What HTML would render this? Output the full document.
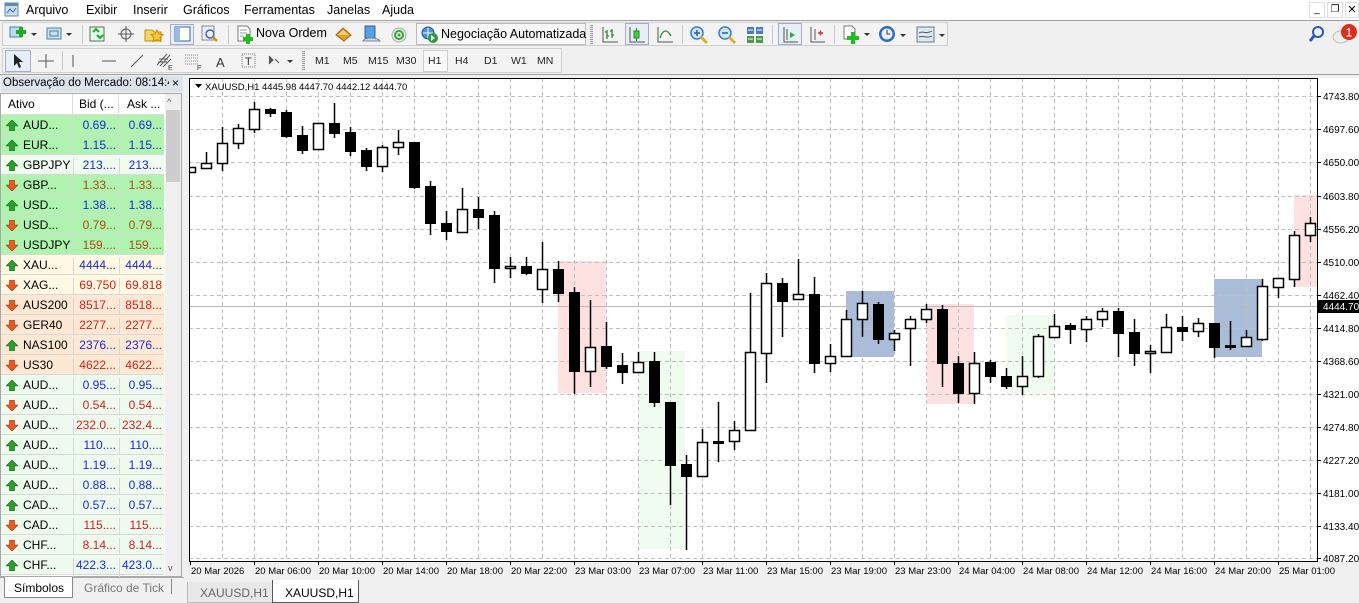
<!DOCTYPE html>
<html><head><meta charset="utf-8">
<style>
*{margin:0;padding:0;box-sizing:border-box}
body{width:1359px;height:603px;overflow:hidden;background:#f0f0f0;font-family:"Liberation Sans",sans-serif;font-size:12px;color:#000;position:relative}
.a{position:absolute}
.menu span{position:absolute;top:3px;font-size:12.5px}
.tb{position:absolute;border:1px solid #d0d0d0;background:#f3f3f3}
.sep{position:absolute;width:1px;background:#c8c8c8}
.ico{position:absolute}
.row{position:absolute;left:0;width:163px;height:20px;border-bottom:1px solid #d8d8d8}
.row .s{position:absolute;left:22px;top:3px;font-size:12px}
.row .b{position:absolute;left:72px;width:45px;text-align:right;top:3px;border-left:1px solid #d8d8d8;height:20px;padding-right:2px}
.row .k{position:absolute;left:118px;width:45px;text-align:right;top:3px;border-left:1px solid #d8d8d8;height:20px;padding-right:2px}
.row svg{position:absolute;left:5px;top:5px}
.tf{position:absolute;top:55px;font-size:10.5px;color:#222}
</style></head><body>
<div class="a" style="left:0;top:0;width:1359px;height:20px;background:#fff"></div>
<svg class="a" style="left:4px;top:2px" width="15" height="15"><rect x="1" y="1" width="13" height="13" fill="#cde" stroke="#68a"/><rect x="1" y="1" width="13" height="3" fill="#68a"/><path d="M3 11 L6 7 L9 10 L12 6" stroke="#36c" fill="none"/></svg>
<div class="menu"><span style="left:26px">Arquivo</span><span style="left:86px">Exibir</span><span style="left:133px">Inserir</span><span style="left:183px">Gráficos</span><span style="left:244px">Ferramentas</span><span style="left:327px">Janelas</span><span style="left:382px">Ajuda</span></div>
<div class="a" style="left:1309px;top:2px;width:16px;height:16px;border:1px solid #ddd;background:#fff;font-size:10px;text-align:center;line-height:13px">_</div>
<div class="a" style="left:1327px;top:2px;width:16px;height:16px;border:1px solid #ddd;background:#fff;font-size:10px;text-align:center;line-height:14px">❐</div>
<div class="a" style="left:1345px;top:2px;width:14px;height:16px;border:1px solid #ddd;background:#fff;font-size:11px;text-align:center;line-height:14px">✕</div>
<div class="a" style="left:0;top:20px;width:1359px;height:1px;background:#a0a0a0"></div>
<div class="tb" style="left:2px;top:22px;width:946px;height:24px"></div>
<svg class="ico" style="left:8px;top:25px" width="30" height="18"><rect x="2" y="2" width="12" height="10" fill="#bde" stroke="#48a"/><path d="M8 7h10M13 2v10" stroke="#2a2" stroke-width="4"/><path d="M23 8l3 3 3-3z" fill="#333"/></svg>
<svg class="ico" style="left:45px;top:25px" width="30" height="18"><rect x="2" y="3" width="14" height="11" fill="#cde" stroke="#48a"/><rect x="5" y="6" width="8" height="5" fill="none" stroke="#48a"/><path d="M21 8l3 3 3-3z" fill="#333"/></svg>
<div class="sep" style="left:82px;top:25px;height:19px"></div>
<svg class="ico" style="left:88px;top:25px" width="20" height="18"><rect x="2" y="2" width="14" height="14" fill="#dfe" stroke="#666"/><path d="M5 7l3-3 3 3M9 10l3 3 3-3" stroke="#2a2" fill="none" stroke-width="2"/></svg>
<svg class="ico" style="left:117px;top:25px" width="18" height="18"><circle cx="9" cy="9" r="5" fill="none" stroke="#555"/><path d="M9 1v16M1 9h16" stroke="#555"/></svg>
<svg class="ico" style="left:144px;top:25px" width="20" height="18"><path d="M1 5h7l2 2h7v9H1z" fill="#f5d66a" stroke="#b90"/><path d="M13 5l2 4 4 .5-3 3 1 4-4-2-4 2 1-4-3-3 4-.5z" fill="#fc3" stroke="#c80"/></svg>
<div class="a" style="left:170px;top:24px;width:24px;height:21px;background:#e6eef8;border:1px solid #aac"></div>
<svg class="ico" style="left:174px;top:26px" width="18" height="17"><rect x="1" y="1" width="15" height="14" fill="#fff" stroke="#36a"/><rect x="1" y="1" width="5" height="14" fill="#9bd"/></svg>
<svg class="ico" style="left:200px;top:25px" width="20" height="18"><rect x="2" y="1" width="12" height="14" fill="#eef" stroke="#888"/><circle cx="10" cy="9" r="4" fill="none" stroke="#46a" stroke-width="1.5"/><path d="M13 12l4 4" stroke="#c90" stroke-width="2.5"/></svg>
<div class="sep" style="left:228px;top:25px;height:19px"></div>
<svg class="ico" style="left:236px;top:25px" width="18" height="19"><path d="M2 1h9l3 3v12H2z" fill="#fff" stroke="#777"/><path d="M4 5h7M4 8h7M4 11h4" stroke="#999"/><path d="M7 14h10M12 9v10" stroke="#2b2" stroke-width="4"/></svg>
<div class="a" style="left:256px;top:26px;font-size:12.5px">Nova Ordem</div>
<svg class="ico" style="left:334px;top:26px" width="20" height="17"><path d="M2 9l7-7 8 7-7 6z" fill="#e0a030" stroke="#a06010"/><path d="M4 9l5-5 6 5" fill="#f8d070"/></svg>
<svg class="ico" style="left:362px;top:25px" width="20" height="19"><rect x="3" y="1" width="10" height="12" fill="#5a9fe0" stroke="#2a60a0"/><path d="M1 16c2-4 14-4 17 0z" fill="#cde" stroke="#789"/></svg>
<svg class="ico" style="left:390px;top:26px" width="18" height="17"><circle cx="9" cy="9" r="7" fill="#e8e8e8" stroke="#aaa"/><circle cx="9" cy="9" r="4" fill="none" stroke="#3a3" stroke-width="2"/><circle cx="9" cy="9" r="1.5" fill="#3a3"/></svg>
<div class="a" style="left:416px;top:23px;width:170px;height:22px;border:1px solid #bbb;background:#f7f7f7"></div>
<svg class="ico" style="left:420px;top:25px" width="20" height="19"><circle cx="8" cy="8" r="6" fill="#4a8fd8" stroke="#2a5a9a"/><path d="M3 8h10M8 3v10" stroke="#fff"/><circle cx="13" cy="13" r="5" fill="#2a9a3a"/><path d="M11 10l4 3-4 3z" fill="#fff"/></svg>
<div class="a" style="left:441px;top:27px;font-size:12.5px">Negociação Automatizada</div>
<div class="sep" style="left:590px;top:25px;height:19px;width:3px;background:repeating-linear-gradient(#999 0 1px,transparent 1px 2px)"></div>
<svg class="ico" style="left:601px;top:26px" width="18" height="18"><path d="M2 1v15h15" stroke="#555" fill="none"/><path d="M6 4v9M6 6H4M6 10h2M11 3v9M11 5H9M11 9h2" stroke="#2a8a2a" stroke-width="1.3"/></svg>
<div class="a" style="left:625px;top:23px;width:24px;height:22px;background:#e6eef8;border:1px solid #aac"></div>
<svg class="ico" style="left:628px;top:26px" width="18" height="18"><path d="M2 1v15h15" stroke="#555" fill="none"/><rect x="6" y="5" width="5" height="7" fill="#4c4" stroke="#282"/><path d="M8.5 2v3M8.5 12v3" stroke="#282"/></svg>
<svg class="ico" style="left:656px;top:26px" width="18" height="18"><path d="M2 1v15h15" stroke="#555" fill="none"/><path d="M4 12c3-9 7-9 11-2" stroke="#2a8a2a" fill="none" stroke-width="1.3"/></svg>
<div class="sep" style="left:682px;top:25px;height:19px"></div>
<svg class="ico" style="left:689px;top:25px" width="20" height="20"><circle cx="8" cy="8" r="6" fill="#cfe6fa" stroke="#3a7ac8" stroke-width="1.5"/><path d="M5 8h6M8 5v6" stroke="#2a5aa8" stroke-width="1.5"/><path d="M12 12l6 6" stroke="#d8b030" stroke-width="3"/></svg>
<svg class="ico" style="left:717px;top:25px" width="20" height="20"><circle cx="8" cy="8" r="6" fill="#cfe6fa" stroke="#3a7ac8" stroke-width="1.5"/><path d="M5 8h6" stroke="#2a5aa8" stroke-width="1.5"/><path d="M12 12l6 6" stroke="#d8b030" stroke-width="3"/></svg>
<svg class="ico" style="left:746px;top:26px" width="18" height="18"><rect x="1" y="1" width="7" height="7" fill="#4a7ac0"/><rect x="10" y="1" width="7" height="7" fill="#4a7ac0"/><rect x="1" y="10" width="7" height="7" fill="#4a9a4a"/><rect x="10" y="10" width="7" height="7" fill="#4a9a4a"/><path d="M2 4h5M11 4h5M2 13h5M11 13h5" stroke="#fff"/></svg>
<div class="sep" style="left:772px;top:25px;height:19px"></div>
<div class="a" style="left:778px;top:23px;width:24px;height:22px;background:#e6eef8;border:1px solid #aac"></div>
<svg class="ico" style="left:781px;top:26px" width="18" height="18"><path d="M3 1v15h14" stroke="#555" fill="none"/><path d="M6 3v11" stroke="#555"/><path d="M9 6l5 3-5 3z" fill="#3a3"/></svg>
<svg class="ico" style="left:808px;top:26px" width="18" height="18"><path d="M3 1v15h14M7 3v11" stroke="#555" fill="none"/><path d="M10 7h5M12.5 4.5v5" stroke="#c33" stroke-width="1.5"/></svg>
<div class="sep" style="left:834px;top:25px;height:19px"></div>
<svg class="ico" style="left:842px;top:24px" width="30" height="21"><path d="M2 2h8l3 3v10H2z" fill="#fff" stroke="#777"/><path d="M5 14h12M11 8v12" stroke="#2b2" stroke-width="4"/><path d="M22 9l3 3 3-3z" fill="#333"/></svg>
<svg class="ico" style="left:878px;top:25px" width="30" height="20"><circle cx="9" cy="9" r="8" fill="#2a6ac8"/><circle cx="9" cy="9" r="5.5" fill="#eef"/><path d="M9 5v4h3" stroke="#333" fill="none"/><path d="M22 9l3 3 3-3z" fill="#333"/></svg>
<svg class="ico" style="left:916px;top:26px" width="30" height="18"><rect x="1" y="1" width="17" height="15" fill="#dbe8f5" stroke="#678"/><path d="M3 7c3-3 6 2 13-2M3 11c4-2 8 2 13-1" stroke="#555" fill="none"/><path d="M23 8l3 3 3-3z" fill="#333"/></svg>
<svg class="ico" style="left:1308px;top:25px" width="18" height="18"><circle cx="10" cy="7" r="5" fill="none" stroke="#2a5ab8" stroke-width="2"/><path d="M6 11l-4 5" stroke="#2a5ab8" stroke-width="3"/></svg>
<svg class="ico" style="left:1332px;top:22px" width="27" height="24"><ellipse cx="9" cy="15" rx="8" ry="6" fill="#eee" stroke="#bbb"/><circle cx="17" cy="10" r="8" fill="#d83020"/><text x="17" y="14.5" font-size="12" fill="#fff" text-anchor="middle" font-family="Liberation Sans">1</text></svg>
<div class="tb" style="left:2px;top:48px;width:560px;height:25px"></div>
<div class="a" style="left:5px;top:50px;width:26px;height:22px;background:#e6eef8;border:1px solid #aac"></div>
<svg class="ico" style="left:12px;top:53px" width="12" height="16"><path d="M2 1v12l3-3 2 5 2-1-2-5h4z" fill="#222"/></svg>
<svg class="ico" style="left:37px;top:53px" width="18" height="16"><path d="M9 1v14M1 8h16" stroke="#555"/></svg>
<div class="sep" style="left:62px;top:51px;height:19px"></div>
<svg class="ico" style="left:68px;top:53px" width="10" height="16"><path d="M5 2v12" stroke="#555"/></svg>
<svg class="ico" style="left:100px;top:53px" width="18" height="16"><path d="M2 8h14" stroke="#555"/></svg>
<svg class="ico" style="left:128px;top:53px" width="18" height="16"><path d="M3 14L15 2" stroke="#555"/></svg>
<svg class="ico" style="left:154px;top:51px" width="20" height="20"><path d="M3 14L13 3M6 15L16 4M9 16L17 8M5 8h9M4 11h9" stroke="#555"/><text x="14" y="19" font-size="7" fill="#333">E</text></svg>
<svg class="ico" style="left:183px;top:51px" width="20" height="20"><path d="M2 4h13M2 7h13M2 10h13M2 13h13" stroke="#888" stroke-dasharray="1 1"/><text x="14" y="19" font-size="7" fill="#333">F</text></svg>
<div class="a" style="left:216px;top:55px;font-size:13px;color:#333">A</div>
<svg class="ico" style="left:240px;top:52px" width="18" height="18"><rect x="2" y="2" width="13" height="13" fill="none" stroke="#777" stroke-dasharray="1 1"/><text x="5" y="13" font-size="11" fill="#333">T</text></svg>
<svg class="ico" style="left:266px;top:53px" width="30" height="16"><path d="M3 3l4 4-4 4M9 6l4 4" stroke="#555" fill="#555"/><path d="M21 7l3 3 3-3z" fill="#333"/></svg>
<div class="sep" style="left:302px;top:51px;height:19px;width:3px;background:repeating-linear-gradient(#999 0 1px,transparent 1px 2px)"></div>
<div class="tf" style="left:315px">M1</div><div class="tf" style="left:343px">M5</div><div class="tf" style="left:368px">M15</div><div class="tf" style="left:396px">M30</div>
<div class="a" style="left:423px;top:50px;width:25px;height:22px;background:#f8f8f8;border:1px solid #ccc"></div>
<div class="tf" style="left:428px">H1</div><div class="tf" style="left:455px">H4</div><div class="tf" style="left:484px">D1</div><div class="tf" style="left:511px">W1</div><div class="tf" style="left:537px">MN</div>
<div class="a" style="left:0;top:74px;width:1359px;height:1px;background:#a0a0a0"></div>
<div class="a" style="left:0;top:75px;width:184px;height:528px;background:#f0f0f0"></div>
<div class="a" style="left:1px;top:76px;width:182px;height:16px;background:#dde3ea"></div>
<div class="a" style="left:3px;top:77px;font-size:11.5px;width:166px;overflow:hidden;white-space:nowrap">Observação do Mercado: 08:14:4:</div>
<div class="a" style="left:172px;top:76px;font-size:12px">×</div>
<div class="a" style="left:0;top:93px;width:182px;height:484px;background:#fff;border:1px solid #aaa"></div>
<div class="a" style="left:1px;top:94px;width:163px;height:21px;background:#fff;border-bottom:1px solid #ddd"></div>
<div class="a" style="left:8px;top:97px;font-size:12px">Ativo</div>
<div class="a" style="left:72px;top:94px;width:1px;height:21px;background:#ddd"></div>
<div class="a" style="left:79px;top:97px;font-size:12px">Bid (...</div>
<div class="a" style="left:118px;top:94px;width:1px;height:21px;background:#ddd"></div>
<div class="a" style="left:127px;top:97px;font-size:12px">Ask ...</div>
<div class="a" style="left:165px;top:94px;width:16px;height:482px;background:#f0f0f0"></div>
<div class="a" style="left:167px;top:97px;font-size:9px;color:#555">^</div>
<div class="a" style="left:166px;top:110px;width:14px;height:72px;background:#cdcdcd"></div>
<div class="a" style="left:168px;top:563px;font-size:9px;color:#555">v</div>
<div id="mw"></div>
<div class="a" style="left:0;top:577px;width:184px;height:1px;background:#aaa"></div>
<div class="a" style="left:4px;top:577px;width:69px;height:21px;background:#fff;border:1px solid #888;border-top:none"></div>
<div class="a" style="left:14px;top:581px;font-size:12px">Símbolos</div>
<div class="a" style="left:84px;top:581px;font-size:12px;color:#777">Gráfico de Tick</div>
<div class="a" style="left:171px;top:579px;width:1px;height:15px;background:#888"></div>
<svg class="a" style="left:184px;top:75px" width="1175" height="528" id="ch"></svg>
<div class="a" style="left:187px;top:582px;width:86px;height:21px;background:#e8e8e8;border:1px solid #bbb;border-top:none"></div>
<div class="a" style="left:200px;top:586px;font-size:12px;color:#666">XAUUSD,H1</div>
<div class="a" style="left:272px;top:580px;width:87px;height:23px;background:#fff;border:1px solid #555;border-top:none"></div>
<div class="a" style="left:285px;top:586px;font-size:12px">XAUUSD,H1</div>
<script>
var rows=[["AUD...","0.69...","0.69...",1,"#aef3ae","#1a2ad0"],["EUR...","1.15...","1.15...",1,"#aef3ae","#1a2ad0"],["GBPJPY","213....","213....",1,"#f0fcf0","#1a2ad0"],["GBP...","1.33...","1.33...",0,"#aef3ae","#b04a10"],["USD...","1.38...","1.38...",1,"#aef3ae","#1a2ad0"],["USD...","0.79...","0.79...",0,"#aef3ae","#b04a10"],["USDJPY","159....","159....",0,"#aef3ae","#b04a10"],["XAU...","4444...","4444...",1,"#fff9e4","#1a2ad0"],["XAG...","69.750","69.818",0,"#fff9e4","#d02020"],["AUS200","8517...","8518...",0,"#fde8d4","#d02020"],["GER40","2277...","2277...",0,"#fde8d4","#d02020"],["NAS100","2376...","2376...",1,"#fde8d4","#1a2ad0"],["US30","4622...","4622...",0,"#fde8d4","#d02020"],["AUD...","0.95...","0.95...",1,"#effaef","#1a2ad0"],["AUD...","0.54...","0.54...",0,"#effaef","#d02020"],["AUD...","232.0...","232.4...",0,"#effaef","#d02020"],["AUD...","110....","110....",1,"#effaef","#1a2ad0"],["AUD...","1.19...","1.19...",1,"#effaef","#1a2ad0"],["AUD...","0.88...","0.88...",1,"#effaef","#1a2ad0"],["CAD...","0.57...","0.57...",1,"#effaef","#1a2ad0"],["CAD...","115....","115....",0,"#effaef","#d02020"],["CHF...","8.14...","8.14...",0,"#effaef","#d02020"],["CHF...","422.3...","423.0...",1,"#effaef","#1a2ad0"]];
var h="";rows.forEach(function(r,i){var up='<svg width="12" height="11"><path d="M6 0L12 6H8.5V11H3.5V6H0z" fill="#2aa02a" stroke="#186018" stroke-width=".6"/></svg>',dn='<svg width="12" height="11"><path d="M6 11L12 5H8.5V0H3.5V5H0z" fill="#e85a20" stroke="#a03010" stroke-width=".6"/></svg>';
h+='<div class="row" style="top:'+(115+i*20)+'px;left:1px;background:'+r[4]+'">'+(r[3]?up:dn)+'<span class="s">'+r[0]+'</span><span class="b" style="color:'+r[5]+'">'+r[1]+'</span><span class="k" style="color:'+r[5]+'">'+r[2]+'</span></div>';});
document.getElementById("mw").innerHTML=h;
var C=[[167,172,167,172,1],[152,168,163,168,1],[127,171,143,163,1],[124,149,128,143,1],[102,133,109,129,1],[108,117,109,113,0],[110,138,112,136,0],[126,154,135,150,0],[123,150,123,149,1],[103,138,123,133,0],[127,156,132,151,0],[148,171,150,166,0],[145,172,147,166,1],[130,155,142,147,1],[142,189,142,187,0],[181,235,186,223,0],[211,240,223,231,0],[188,232,209,232,1],[197,229,209,217,0],[211,283,215,268,0],[257,278,266,268,1],[257,275,266,273,0],[242,303,269,289,1],[261,302,269,293,0],[287,394,292,371,0],[300,387,347,371,1],[322,369,346,366,0],[353,384,365,372,0],[352,373,362,372,1],[352,407,361,402,0],[402,505,402,465,0],[455,550,464,476,0],[429,477,442,476,1],[402,462,441,442,0],[421,450,430,441,1],[293,430,352,430,1],[273,383,283,353,1],[278,337,283,301,0],[259,299,294,299,1],[277,373,294,363,0],[344,372,356,363,1],[310,357,319,356,1],[291,337,303,319,1],[302,344,304,339,0],[330,351,333,339,1],[316,366,319,328,1],[304,323,309,319,1],[305,387,309,363,0],[356,403,363,393,0],[352,404,363,393,1],[360,383,362,376,0],[368,389,376,386,0],[356,395,376,386,1],[334,378,336,376,1],[314,338,326,337,1],[323,344,325,329,0],[316,342,319,329,1],[308,327,311,319,1],[308,357,311,333,0],[319,366,332,353,0],[345,373,351,353,1],[314,352,327,352,1],[316,341,327,331,0],[318,337,323,331,1],[323,358,323,347,0],[321,350,345,347,0],[330,346,337,346,1],[279,341,286,339,1],[278,298,278,287,1],[231,287,235,279,1],[217,242,223,235,1]];
var s='<defs><clipPath id="cp"><rect x="5" y="3" width="1128" height="483"/></clipPath></defs>',ox=184,oy=75;
function R(x,y,w,hh,f){s+='<rect x="'+(x-ox)+'" y="'+(y-oy)+'" width="'+w+'" height="'+hh+'" fill="'+f+'"/>';}
R(189,78,1128,483,"#fff");
R(558,261,48,132,"#fde0e0");R(638,351,47,198,"#effcef");R(846,291,48,66,"#a9bcd8");R(927,304,47,100,"#fde0e0");R(1006,315,48,78,"#effcef");R(1214,279,48,78,"#a9bcd8");R(1294,195,23,92,"#fde0e0");
var P=[["4743.80",96],["4697.60",129],["4650.00",162],["4603.80",196],["4556.20",229],["4510.00",262],["4462.40",295],["4414.80",328],["4368.60",361],["4321.00",394],["4274.80",427],["4227.20",460],["4181.00",493],["4133.40",526],["4087.20",558]];
P.forEach(function(p){s+='<line x1="5" x2="1133" y1="'+(p[1]-oy+.5)+'" y2="'+(p[1]-oy+.5)+'" stroke="#c0c0c0" stroke-dasharray="4 3"/>';});
for(var x=222;x<1317;x+=32){s+='<line y1="3" y2="486" x1="'+(x-ox+.5)+'" x2="'+(x-ox+.5)+'" stroke="#c0c0c0" stroke-dasharray="4 3"/>';}
s+='<line x1="5" x2="1133" y1="'+(306-oy+.5)+'" y2="'+(306-oy+.5)+'" stroke="#b8b8b8"/><g clip-path="url(#cp)">';
C.forEach(function(c,k){var x=190+16*k-ox;s+='<line x1="'+(x+.5)+'" x2="'+(x+.5)+'" y1="'+(c[0]-oy)+'" y2="'+(c[1]-oy)+'" stroke="#000" stroke-width="1.5"/>';var t=Math.min(c[2],c[3]),b=Math.max(c[2],c[3]);if(b-t<2)b=t+2;if(c[4])s+='<rect x="'+(x-4.5)+'" y="'+(t-oy+.5)+'" width="10" height="'+(b-t)+'" fill="#fff" stroke="#000" stroke-width="1.5"/>';else s+='<rect x="'+(x-5)+'" y="'+(t-oy)+'" width="11" height="'+(b-t+1)+'" fill="#000"/>';});
s+='</g>';
R(1317,78,42,483,"#fff");
s+='<rect x="'+(189-ox+.5)+'" y="'+(78-oy+.5)+'" width="1128" height="483" fill="none" stroke="#000"/>';
P.forEach(function(p){s+='<line x1="1133" x2="1137" y1="'+(p[1]-oy+.5)+'" y2="'+(p[1]-oy+.5)+'" stroke="#000"/><text x="1139" y="'+(p[1]-oy+4)+'" font-size="10" font-family="Liberation Sans">'+p[0]+'</text>';});
s+='<rect x="'+(1317-ox)+'" y="'+(300-oy)+'" width="42" height="13" fill="#000"/><text x="1139" y="'+(310-oy)+'" font-size="10" fill="#fff" font-family="Liberation Sans">4444.70</text>';
var T=["20 Mar 2026","20 Mar 06:00","20 Mar 10:00","20 Mar 14:00","20 Mar 18:00","20 Mar 22:00","23 Mar 03:00","23 Mar 07:00","23 Mar 11:00","23 Mar 15:00","23 Mar 19:00","23 Mar 23:00","24 Mar 04:00","24 Mar 08:00","24 Mar 12:00","24 Mar 16:00","24 Mar 20:00","25 Mar 01:00"];
T.forEach(function(t,i){var x=190+64*i-ox;s+='<line x1="'+(x+.5)+'" x2="'+(x+.5)+'" y1="486" y2="490" stroke="#000"/><text x="'+(x+1)+'" y="499" font-size="9.5" font-family="Liberation Sans">'+t+'</text>';});
s+='<path d="M11 9h7l-3.5 4z" fill="#000"/><text x="21" y="15" font-size="9.5" font-family="Liberation Sans">XAUUSD,H1  4445.98 4447.70 4442.12 4444.70</text>';
document.getElementById("ch").innerHTML=s;
</script>
</body></html>
